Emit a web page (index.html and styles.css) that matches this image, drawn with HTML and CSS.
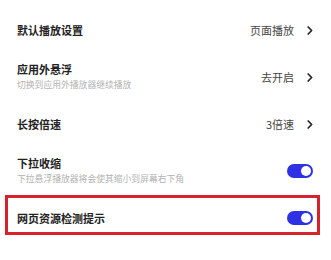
FILE: index.html
```html
<!DOCTYPE html>
<html>
<head>
<meta charset="utf-8">
<link rel="stylesheet" href="styles.css">
</head>
<body>
<div class="list">
  <div class="row">
    <div class="title">默认播放设置</div>
    <div class="right"><span class="value">页面播放</span><svg class="chev" width="6" height="9" viewBox="0 0 6 9"><path d="M1.2 1 L4.6 4.5 L1.2 8" fill="none" stroke="#222" stroke-width="1.7" stroke-linecap="round" stroke-linejoin="round"/></svg></div>
  </div>
  <div class="row tall">
    <div class="text"><div class="title">应用外悬浮</div><div class="sub">切换到应用外播放器继续播放</div></div>
    <div class="right"><span class="value">去开启</span><svg class="chev" width="6" height="9" viewBox="0 0 6 9"><path d="M1.2 1 L4.6 4.5 L1.2 8" fill="none" stroke="#222" stroke-width="1.7" stroke-linecap="round" stroke-linejoin="round"/></svg></div>
  </div>
  <div class="row">
    <div class="title">长按倍速</div>
    <div class="right"><span class="value">3倍速</span><svg class="chev" width="6" height="9" viewBox="0 0 6 9"><path d="M1.2 1 L4.6 4.5 L1.2 8" fill="none" stroke="#222" stroke-width="1.7" stroke-linecap="round" stroke-linejoin="round"/></svg></div>
  </div>
  <div class="row tall">
    <div class="text"><div class="title">下拉收缩</div><div class="sub">下拉悬浮播放器将会使其缩小到屏幕右下角</div></div>
    <div class="toggle"><span class="knob"></span></div>
  </div>
  <div class="row marked">
    <div class="title">网页资源检测提示</div>
    <div class="toggle"><span class="knob"></span></div>
  </div>
</div>
</body>
</html>
```
FILE: styles.css
```css
html, body {
  margin: 0;
  padding: 0;
  background: #fff;
}
body {
  font-family: "Noto Sans CJK SC", "Noto Sans", sans-serif;
  width: 331px;
  height: 260px;
  overflow: hidden;
}
.list {
  padding-top: 11px;
}
.row {
  height: 38px;
  display: flex;
  align-items: center;
  justify-content: space-between;
  padding: 0 18px 0 17px;
  position: relative;
}
.row.tall {
  height: 56px;
}
.title {
  font-size: 11px;
  line-height: 16px;
  font-weight: 700;
  color: #222;
}
.sub {
  font-size: 8.8px;
  line-height: 16px;
  color: #b2b2b2;
  white-space: nowrap;
}
.right {
  display: flex;
  align-items: center;
  gap: 13px;
}
.value {
  font-size: 11px;
  line-height: 16px;
  color: #444;
}
.chev {
  display: block;
}
.toggle {
  width: 26px;
  height: 14px;
  border-radius: 7px;
  background: #2d31e3;
  position: relative;
  flex: none;
}
.knob {
  position: absolute;
  right: 2px;
  top: 2px;
  width: 10px;
  height: 10px;
  border-radius: 50%;
  background: #fff;
}
.marked::after {
  content: "";
  position: absolute;
  left: 5px;
  right: 11px;
  top: -4px;
  bottom: 2px;
  border: 3px solid #d8222b;
}
```
